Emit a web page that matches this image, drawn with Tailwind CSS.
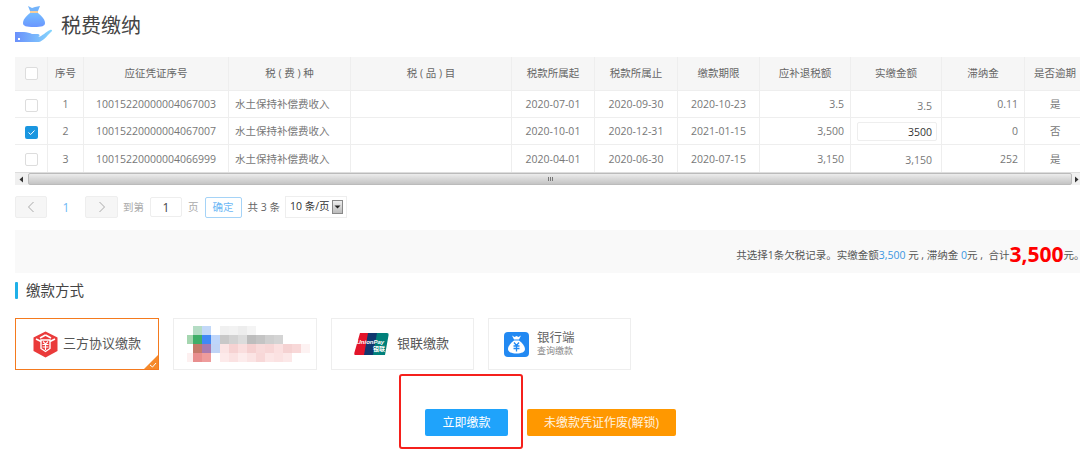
<!doctype html>
<html lang="zh-CN">
<head>
<meta charset="utf-8">
<title>税费缴纳</title>
<script src="https://cdn.jsdelivr.net/npm/@tailwindcss/browser@4"></script>
</head>
<body class="bg-white">
<div class="relative w-[1080px] h-[454px] overflow-hidden bg-white pl-[15px] text-[10.5px] text-[#777] font-['Open_Sans','Noto_Sans_CJK_SC',sans-serif]">

  <!-- Heading -->
  <div class="flex items-center h-[57px] pb-[7px] gap-[8px]">
    <svg width="38" height="38" viewBox="0 0 38 38" class="-mt-[2px]">
      <defs>
        <linearGradient id="bag" x1="0" y1="0" x2="0" y2="1"><stop offset="0" stop-color="#74bcff"/><stop offset="1" stop-color="#6a96ff"/></linearGradient>
        <linearGradient id="hand" x1="0" y1="0" x2="1" y2="0"><stop offset="0" stop-color="#6a90fb"/><stop offset="1" stop-color="#86d6fd"/></linearGradient>
      </defs>
      <path d="M13 1 L17 3 L20 2 L25 1 L23 6 L15 6 Z" fill="#74b4fb"/>
      <rect x="15" y="6" width="8" height="2" fill="#f5cf9c"/>
      <path d="M15 8 H23 C27 11 30 15 30 18 C30 21 27 22 19 22 C11 22 8 21 8 18 C8 15 11 11 15 8 Z" fill="url(#bag)"/>
      <path d="M0 27 H9 C12 27 15 28 17 29 L23 29 C25 29 25 32 23 32 L16 32 L24 32 C27 31 31 27 35 25 C37 24 38 26 36 27 C32 31 28 36 24 37 L9 37 L0 37 Z" fill="url(#hand)"/>
      <rect x="3" y="33" width="2" height="2" fill="#fff"/>
    </svg>
    <h1 class="text-[20px] leading-none text-[#444] mt-[2px]">税费缴纳</h1>
  </div>

  <!-- Table -->
  <div class="w-[1065px] overflow-hidden">
    <div class="grid w-[1090px] grid-cols-[33px_36px_145px_122px_161px_83px_83px_82px_91px_91px_83px_60px] h-[34px] bg-[#f6f6f6] text-[#666] items-stretch text-center border-b border-[#eee]">
      <div class="flex items-center justify-center border-r border-[#eee]"><span class="w-[13px] h-[13px] bg-white border border-[#ddd] rounded-[2px]"></span></div>
      <div class="flex items-center justify-center pt-[1px] border-r border-[#eee]">序号</div>
      <div class="flex items-center justify-center pt-[1px] border-r border-[#eee]">应征凭证序号</div>
      <div class="flex items-center justify-center pt-[1px] border-r border-[#eee]">税 ( 费 ) 种</div>
      <div class="flex items-center justify-center pt-[1px] border-r border-[#eee]">税 ( 品 ) 目</div>
      <div class="flex items-center justify-center pt-[1px] border-r border-[#eee]">税款所属起</div>
      <div class="flex items-center justify-center pt-[1px] border-r border-[#eee]">税款所属止</div>
      <div class="flex items-center justify-center pt-[1px] border-r border-[#eee]">缴款期限</div>
      <div class="flex items-center justify-center pt-[1px] border-r border-[#eee]">应补退税额</div>
      <div class="flex items-center justify-center pt-[1px] border-r border-[#eee]">实缴金额</div>
      <div class="flex items-center justify-center pt-[1px] border-r border-[#eee]">滞纳金</div>
      <div class="flex items-center pl-[9px] pt-[1px]">是否逾期</div>
    </div>

    <div class="grid w-[1090px] grid-cols-[33px_36px_145px_122px_161px_83px_83px_82px_91px_91px_83px_60px] h-[27px] items-stretch border-b border-[#eee]">
      <div class="flex items-center justify-center pt-[2px] border-r border-[#eee]"><span class="w-[13px] h-[13px] bg-white border border-[#ddd] rounded-[2px]"></span></div>
      <div class="flex items-center justify-center pt-[2px] border-r border-[#eee]">1</div>
      <div class="flex items-center justify-center pt-[2px] border-r border-[#eee]">10015220000004067003</div>
      <div class="flex items-center pl-[6px] pt-[2px] border-r border-[#eee]">水土保持补偿费收入</div>
      <div class="border-r border-[#eee]"></div>
      <div class="flex items-center justify-center pt-[2px] border-r border-[#eee]">2020-07-01</div>
      <div class="flex items-center justify-center pt-[2px] border-r border-[#eee]">2020-09-30</div>
      <div class="flex items-center justify-center pt-[2px] border-r border-[#eee]">2020-10-23</div>
      <div class="flex items-center justify-end pr-[6px] pt-[2px] border-r border-[#eee]">3.5</div>
      <div class="flex items-center justify-end pr-[9px] pt-[5px] border-r border-[#eee]">3.5</div>
      <div class="flex items-center justify-end pr-[6px] pt-[2px] border-r border-[#eee]">0.11</div>
      <div class="flex items-center pl-[25px] pt-[2px]">是</div>
    </div>

    <div class="grid w-[1090px] grid-cols-[33px_36px_145px_122px_161px_83px_83px_82px_91px_91px_83px_60px] h-[27px] items-stretch border-b border-[#eee]">
      <div class="flex items-center justify-center pt-[2px] border-r border-[#eee]">
        <span class="flex items-center justify-center w-[13px] h-[13px] bg-[#1a96e0] rounded-[2px]">
          <svg width="9" height="9" viewBox="0 0 9 9"><path d="M1.5 4.5 L3.7 6.5 L7.5 2.5" fill="none" stroke="#fff" stroke-width="1"/></svg>
        </span>
      </div>
      <div class="flex items-center justify-center pt-[2px] border-r border-[#eee]">2</div>
      <div class="flex items-center justify-center pt-[2px] border-r border-[#eee]">10015220000004067007</div>
      <div class="flex items-center pl-[6px] pt-[2px] border-r border-[#eee]">水土保持补偿费收入</div>
      <div class="border-r border-[#eee]"></div>
      <div class="flex items-center justify-center pt-[2px] border-r border-[#eee]">2020-10-01</div>
      <div class="flex items-center justify-center pt-[2px] border-r border-[#eee]">2020-12-31</div>
      <div class="flex items-center justify-center pt-[2px] border-r border-[#eee]">2021-01-15</div>
      <div class="flex items-center justify-end pr-[6px] pt-[2px] border-r border-[#eee]">3,500</div>
      <div class="flex items-center border-r border-[#eee] pl-[6px]">
        <span class="flex items-end justify-end w-[80px] h-[19px] border border-[#eee] rounded-[2px] pr-[4px] text-[#333] leading-[16px]">3500</span>
      </div>
      <div class="flex items-center justify-end pr-[6px] pt-[2px] border-r border-[#eee]">0</div>
      <div class="flex items-center pl-[25px] pt-[2px]">否</div>
    </div>

    <div class="grid w-[1090px] grid-cols-[33px_36px_145px_122px_161px_83px_83px_82px_91px_91px_83px_60px] h-[27px] items-stretch">
      <div class="flex items-center justify-center pt-[2px] border-r border-[#eee]"><span class="w-[13px] h-[13px] bg-white border border-[#ddd] rounded-[2px]"></span></div>
      <div class="flex items-center justify-center pt-[2px] border-r border-[#eee]">3</div>
      <div class="flex items-center justify-center pt-[2px] border-r border-[#eee]">10015220000004066999</div>
      <div class="flex items-center pl-[6px] pt-[2px] border-r border-[#eee]">水土保持补偿费收入</div>
      <div class="border-r border-[#eee]"></div>
      <div class="flex items-center justify-center pt-[2px] border-r border-[#eee]">2020-04-01</div>
      <div class="flex items-center justify-center pt-[2px] border-r border-[#eee]">2020-06-30</div>
      <div class="flex items-center justify-center pt-[2px] border-r border-[#eee]">2020-07-15</div>
      <div class="flex items-center justify-end pr-[6px] pt-[2px] border-r border-[#eee]">3,150</div>
      <div class="flex items-center justify-end pr-[9px] pt-[5px] border-r border-[#eee]">3,150</div>
      <div class="flex items-center justify-end pr-[6px] pt-[2px] border-r border-[#eee]">252</div>
      <div class="flex items-center pl-[25px] pt-[2px]">是</div>
    </div>

    <!-- Scrollbar -->
    <div class="flex items-center h-[13px] bg-[#f0f0f0] border-t border-[#ddd]">
      <div class="flex items-center justify-center w-[13px] shrink-0">
        <svg width="5" height="7" viewBox="0 0 5 7"><path d="M4 0.5 V6.5 L0.5 3.5 Z" fill="#333"/></svg>
      </div>
      <div class="flex flex-1 items-center justify-center h-full border border-[#bbb] rounded-[2px] bg-gradient-to-b from-[#ececec] to-[#c4c4c4]">
        <div class="flex gap-[1px] h-[4px]">
          <span class="w-[1px] bg-[#777]"></span><span class="w-[1px] bg-[#777]"></span><span class="w-[1px] bg-[#777]"></span>
        </div>
      </div>
      <div class="flex items-center justify-center w-[8px] shrink-0">
        <svg width="5" height="7" viewBox="0 0 5 7"><path d="M1 0.5 V6.5 L4.5 3.5 Z" fill="#333"/></svg>
      </div>
    </div>
  </div>

  <!-- Pagination -->
  <div class="flex items-center h-[22px] mt-[11px]">
    <span class="flex items-center justify-center w-[32px] h-[22px] bg-[#f6f6f6] border border-[#eee] rounded-[2px]">
      <svg width="8" height="12" viewBox="0 0 8 12"><path d="M6.5 1 L1.5 6 L6.5 11" fill="none" stroke="#aaa" stroke-width="1"/></svg>
    </span>
    <span class="w-[38px] pt-[2px] text-center text-[#6db8f5] text-[12px]">1</span>
    <span class="flex items-center justify-center w-[33px] h-[22px] bg-[#f6f6f6] border border-[#eee] rounded-[2px]">
      <svg width="8" height="12" viewBox="0 0 8 12"><path d="M1.5 1 L6.5 6 L1.5 11" fill="none" stroke="#aaa" stroke-width="1"/></svg>
    </span>
    <span class="ml-[5px] pt-[2px] text-[#aaa]">到第</span>
    <span class="flex items-center justify-center ml-[6px] pt-[1px] w-[32px] h-[20px] border border-[#eee] rounded-[2px] text-[#444] text-[12px]">1</span>
    <span class="ml-[6px] pt-[2px] text-[#aaa]">页</span>
    <span class="flex items-center justify-center ml-[6px] pt-[1px] w-[37px] h-[21px] border border-[#a5d3f7] rounded-[2px] text-[#6db8f5]">确定</span>
    <span class="ml-[6px] pt-[1px] text-[#666]">共 3 条</span>
    <span class="flex items-center ml-[5px] w-[62px] h-[22px] border border-[#eee] pl-[4px] gap-[2px] text-[#333] whitespace-nowrap">10 条/页
      <span class="flex items-center justify-center w-[11px] h-[14px] bg-gradient-to-b from-[#eee] to-[#bbb] border border-[#888] shrink-0">
        <svg width="7" height="4" viewBox="0 0 7 4"><path d="M0.5 0.5 H6.5 L3.5 3.5 Z" fill="#222"/></svg>
      </span>
    </span>
  </div>

  <!-- Summary band -->
  <div class="flex items-end justify-end w-[1065px] h-[43px] mt-[12px] bg-[#f9f9f9] pb-[8px] whitespace-nowrap text-[#555] leading-[20px]">
    <span>共选择1条欠税记录。实缴金额<span class="text-[#3b96e0]">3,500</span> 元 , 滞纳金 <span class="text-[#3b96e0]">0</span>元 ,&nbsp; 合计</span><span class="text-[21px] font-bold text-[#f00] leading-[22px]">3,500</span><span>元<span class="inline-block w-[6px]">。</span></span>
  </div>

  <!-- Section title -->
  <div class="flex items-center h-[17px] mt-[9px] gap-[8px]">
    <span class="w-[3px] h-[17px] bg-[#1fb0e8] rounded-[1px]"></span>
    <span class="text-[14.5px] text-[#444]">缴款方式</span>
  </div>

  <!-- Cards -->
  <div class="flex mt-[19px] gap-[14px]">
    <div class="relative flex items-center justify-center w-[144px] h-[52px] border border-[#f47a1e] gap-[5px] overflow-hidden">
      <svg width="25" height="27" viewBox="0 0 25 27">
        <path d="M12.5 0.5 L24.5 6.5 V20 L12.5 26.5 L0.5 20 V6.5 Z" fill="#ea3a3a"/>
        <path d="M3 8 L8 10.5 M22 8 L17 10.5 M12.5 4 L7 7 M12.5 4 L18 7" fill="none" stroke="#fff" stroke-width="1.6"/>
        <path d="M8 9 H17 V17.5 L12.5 20.5 L8 17.5 Z" fill="none" stroke="#fff" stroke-width="1.4"/>
        <path d="M10 10.5 L12.5 13 L15 10.5 M9.5 13.5 H15.5 M9.5 16 H15.5 M12.5 13 V19" fill="none" stroke="#fff" stroke-width="1.2"/>
      </svg>
      <span class="text-[13px] text-[#555]">三方协议缴款</span>
      <svg width="14" height="14" viewBox="0 0 14 14" class="absolute right-0 bottom-0">
        <path d="M14 0 V14 H0 Z" fill="#f58a2c"/>
        <path d="M6 10 L8.5 12 L12 8" fill="none" stroke="#fff" stroke-width="1"/>
      </svg>
    </div>

    <div class="flex items-center w-[144px] h-[52px] border border-[#eee] pl-[13px]">
      <div class="grid grid-cols-[6px_repeat(13,9px)] grid-rows-[repeat(4,9px)]">
        <span></span><span class="bg-[#b4dcc4]"></span><span class="bg-[#c2d8f8]"></span><span></span><span class="bg-[#f0f0f0]"></span><span class="bg-[#f2f2f2]"></span><span class="bg-[#ededed]"></span><span class="bg-[#f4f4f4]"></span><span></span><span></span><span></span><span></span><span></span><span></span>
        <span class="bg-[#a5d6b0]"></span><span class="bg-[#3fae68]"></span><span class="bg-[#4088f5]"></span><span class="bg-[#bfd6fa]"></span><span class="bg-[#c8c8c8]"></span><span class="bg-[#d2d2d2]"></span><span class="bg-[#dcdcdc]"></span><span class="bg-[#bdbdbd]"></span><span class="bg-[#c4c4c4]"></span><span class="bg-[#cfcfcf]"></span><span class="bg-[#d4d4d4]"></span><span></span><span></span><span></span>
        <span></span><span class="bg-[#c47a6a]"></span><span class="bg-[#a87ab0]"></span><span class="bg-[#c0d4f6]"></span><span class="bg-[#fbe4e4]"></span><span class="bg-[#f6d2d2]"></span><span class="bg-[#fadede]"></span><span class="bg-[#f5d0d0]"></span><span class="bg-[#f8dada]"></span><span class="bg-[#f7d6d6]"></span><span class="bg-[#fbe0e0]"></span><span class="bg-[#f5d2d2]"></span><span class="bg-[#f8d8d8]"></span><span class="bg-[#fdf2f2]"></span>
        <span class="bg-[#fdf0f0]"></span><span class="bg-[#e88e8e]"></span><span class="bg-[#ee9c9c]"></span><span></span><span class="bg-[#fdeaea]"></span><span class="bg-[#fbe2e2]"></span><span class="bg-[#fdecec]"></span><span class="bg-[#fbe4e4]"></span><span class="bg-[#f8d8d8]"></span><span class="bg-[#fce6e6]"></span><span class="bg-[#fbe2e2]"></span><span class="bg-[#fce8e8]"></span><span></span><span></span>
      </div>
    </div>

    <div class="flex items-center justify-center w-[143px] h-[52px] border border-[#eee] gap-[8px] pr-[2px]">
      <svg width="35" height="22" viewBox="0 0 35 22">
        <path d="M6 0 H16 L12 22 H1 Q0 22 0.3 20 Z" fill="#e2142a"/>
        <path d="M14 0 H25 L21 22 H10 Z" fill="#10386f"/>
        <path d="M23 0 H33 Q35 0 34.6 2 L31 22 H19 Z" fill="#00807a"/>
        <text x="2.5" y="11" font-size="6" font-style="italic" font-weight="700" fill="#fff" font-family="Liberation Sans">UnionPay</text>
        <text x="19" y="18" font-size="6" font-weight="700" fill="#fff">银联</text>
      </svg>
      <span class="text-[13px] text-[#555]">银联缴款</span>
    </div>

    <div class="flex items-center w-[143px] h-[52px] border border-[#eee] gap-[8px] pl-[15px]">
      <svg width="25" height="25" viewBox="0 0 25 25">
        <rect width="25" height="25" rx="4" fill="#2289f2"/>
        <path d="M8 3.5 L10.5 5 L12.5 4 L14.5 5 L17 3.5 L15 7.5 H10 Z" fill="#fff"/>
        <path d="M10 8.5 H15 C18.5 11 21 14.5 21 17 C21 20 17.5 21.5 12.5 21.5 C7.5 21.5 4 20 4 17 C4 14.5 6.5 11 10 8.5 Z" fill="#fff"/>
        <path d="M10 10.5 L12.5 13.5 L15 10.5 M9.5 14 H15.5 M9.5 16.5 H15.5 M12.5 13.5 V19.5" fill="none" stroke="#2289f2" stroke-width="1.3"/>
      </svg>
      <span class="flex flex-col text-[#666]">
        <span class="text-[12.5px] leading-[14px]">银行端</span>
        <span class="text-[9px] leading-[12px] text-[#888]">查询缴款</span>
      </span>
    </div>
  </div>

  <!-- Actions -->
  <div class="flex mt-[39px] pl-[410px] gap-[19px] text-[12px]">
    <button class="w-[83px] h-[27px] bg-[#1fa3fb] text-white rounded-[2px]">立即缴款</button>
    <button class="w-[149px] h-[27px] bg-[#ff9800] text-[#fff3e0] rounded-[2px]">未缴款凭证作废(解锁)</button>
  </div>

  <!-- Red annotation -->
  <div class="absolute left-[399px] top-[374px] w-[124px] h-[75px] border-2 border-[#f5201c] rounded-[3px]"></div>
</div>
</body>
</html>
